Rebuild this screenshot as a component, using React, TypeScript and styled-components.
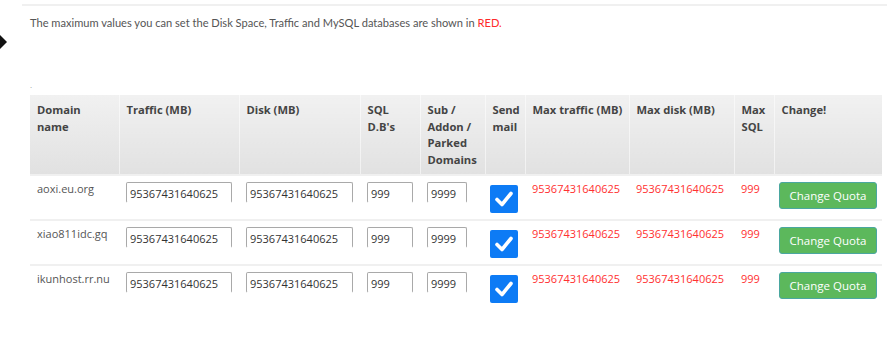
import React from 'react';
import styled, { createGlobalStyle } from 'styled-components';

const GlobalStyle = createGlobalStyle`
  body {
    margin: 0;
    background: #fff;
    font-family: 'Open Sans', 'Liberation Sans', sans-serif;
  }
`;

const Page = styled.div`
  display: flex;
  width: 887px;
  height: 344px;
  overflow: hidden;
`;

const Gutter = styled.div`
  width: 22px;
  flex-shrink: 0;
  padding-top: 35px;
  box-sizing: border-box;
`;

const Arrow = styled.div`
  width: 0;
  height: 0;
  border-top: 7.5px solid transparent;
  border-bottom: 7.5px solid transparent;
  border-left: 7px solid #111;
`;

const Content = styled.div`
  flex: 1;
  margin-top: 4px;
  border-top: 2px solid #f0f0f0;
  padding: 9px 5px 0 8px;
`;

const Notice = styled.p`
  margin: 0;
  font-family: Lato, 'Liberation Sans', sans-serif;
  font-size: 11.1px;
  line-height: 15px;
  color: #555;
`;

const Red = styled.span`
  color: #ff2a2a;
`;

const Dot = styled.div`
  margin-top: 51px;
  height: 14px;
  font-size: 8px;
  line-height: 8px;
  color: #999;
`;

const Table = styled.table`
  width: 852px;
  border-collapse: collapse;
  table-layout: fixed;
  font-size: 11px;
`;

const Th = styled.th`
  height: 80px;
  box-sizing: border-box;
  padding: 7px 2px 0 7px;
  vertical-align: top;
  text-align: left;
  font-weight: 700;
  font-size: 11.2px;
  line-height: 16.6px;
  color: #444;
  background: linear-gradient(#f1f1f1, #e1e1e1);
  border-left: 1px solid rgba(255, 255, 255, 0.55);
  &:first-child {
    border-left: none;
  }
`;

const Tr = styled.tr`
  border-top: 2px solid #f0f0f0;
`;

const Td = styled.td<{ $tight?: boolean }>`
  height: 45px;
  box-sizing: border-box;
  padding: 5px 0 0 ${(p) => (p.$tight ? 5 : 7)}px;
  vertical-align: top;
  color: #555;
  line-height: 16px;
  white-space: nowrap;
`;

const RedValue = styled.span`
  display: block;
  color: #ff3030;
  font-size: 11px;
`;

const Input = styled.input<{ $w: number }>`
  width: ${(p) => p.$w}px;
  height: 21px;
  box-sizing: border-box;
  margin: 1px 0 0;
  padding: 1px 3px 0;
  border: 1px solid #a9a9a9;
  border-bottom-color: #fff;
  border-radius: 2px;
  font-family: 'Open Sans', 'Liberation Sans', sans-serif;
  font-size: 11px;
  color: #333;
  background: #fff;
  outline: none;
`;

const CheckBox = styled.div`
  width: 28px;
  height: 28px;
  margin-top: 4px;
  border-radius: 2px;
  background: #0d7bf5;
  display: flex;
  align-items: center;
  justify-content: center;
`;

const Button = styled.button`
  width: 98px;
  height: 27px;
  margin-top: 1px;
  border: 1px solid #4aa7a0;
  border-radius: 3px;
  background: #5cb85c;
  color: #fff;
  font-family: 'Open Sans', 'Liberation Sans', sans-serif;
  font-size: 11.5px;
  padding: 0;
`;

const widths = [89, 120, 121, 60, 65, 40, 104, 105, 40, 108];

const headers: React.ReactNode[] = [
  <>Domain<br />name</>,
  'Traffic (MB)',
  'Disk (MB)',
  <>SQL<br />D.B's</>,
  <>Sub /<br />Addon /<br />Parked<br />Domains</>,
  <>Send<br />mail</>,
  'Max traffic (MB)',
  'Max disk (MB)',
  <>Max<br />SQL</>,
  'Change!',
];

const domains = ['aoxi.eu.org', 'xiao811idc.gq', 'ikunhost.rr.nu'];

const Check = () => (
  <svg width="18" height="16" viewBox="0 0 18 16">
    <path d="M2 8.5 L7 13.5 L16 2.5" fill="none" stroke="#fff" strokeWidth="3.6" strokeLinecap="round" strokeLinejoin="round" />
  </svg>
);

const App: React.FC = () => {
  return (
    <>
      <GlobalStyle />
      <Page>
        <Gutter>
          <Arrow />
        </Gutter>
        <Content>
          <Notice>
            The maximum values you can set the Disk Space, Traffic and MySQL databases are shown in <Red>RED.</Red>
          </Notice>
          <Dot>.</Dot>
          <Table>
            <colgroup>
              {widths.map((w, i) => (
                <col key={i} style={{ width: w }} />
              ))}
            </colgroup>
            <thead>
              <tr>
                {headers.map((h, i) => (
                  <Th key={i}>{h}</Th>
                ))}
              </tr>
            </thead>
            <tbody>
              {domains.map((d) => (
                <Tr key={d}>
                  <Td>{d}</Td>
                  <Td><Input $w={106} defaultValue="95367431640625" /></Td>
                  <Td><Input $w={107} defaultValue="95367431640625" /></Td>
                  <Td><Input $w={46} defaultValue="999" /></Td>
                  <Td><Input $w={40} defaultValue="9999" /></Td>
                  <Td $tight><CheckBox><Check /></CheckBox></Td>
                  <Td><RedValue>95367431640625</RedValue></Td>
                  <Td><RedValue>95367431640625</RedValue></Td>
                  <Td><RedValue>999</RedValue></Td>
                  <Td $tight><Button>Change Quota</Button></Td>
                </Tr>
              ))}
            </tbody>
          </Table>
        </Content>
      </Page>
    </>
  );
};

export default App;
